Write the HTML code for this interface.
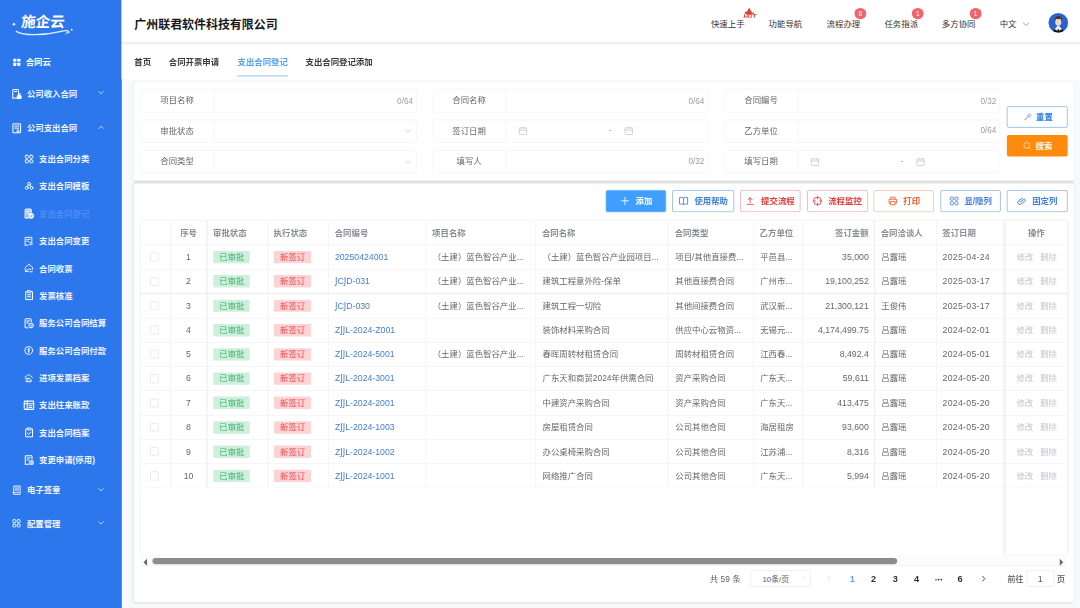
<!DOCTYPE html><html lang="zh-CN"><head><meta charset="utf-8"><title>支出合同登记</title>
<style>
*{box-sizing:border-box;margin:0;padding:0}
html,body{width:1080px;height:608px;overflow:hidden;background:#f8f9fa}
body{font-family:"Liberation Sans","Noto Sans CJK SC",sans-serif;color:#333}
#root{position:absolute;left:0;top:0;width:1920px;height:1081px;transform:scale(.5625);transform-origin:0 0;font-size:14.93px}
.side{color:#fff}
.m{font-weight:700;color:#eef4ff}
.num{font-size:15.5px}
.hd{color:#8a8d93;font-weight:700}
.td{color:#64676c}
.lnk{color:#467ed6}
.lbl{color:#666}
.cnt{color:#9a9da3;font-size:14.6px}
.tagg{background:#cfefdd;color:#3bb26d}
.tagr{background:#fdd3d5;color:#e94b4b}
.op{color:#c3c6cc}
.j{font-family:"DejaVu Sans","Liberation Sans",sans-serif;font-size:15px}
.btn{border-radius:3.2px;font-weight:700}
svg{fill:none}
</style></head><body><div id="root">
<div class="side" style="position:absolute;left:0px;top:0px;width:215.64px;height:1080.89px;background:#2c77ec;border-right:1.2px solid #2a68cc;"></div>
<svg style="position:absolute;left:17.78px;top:14.22px;width:124.44px;height:56.89px;overflow:visible;" viewBox="10 8 70 32"><text x="22.9" y="27.2" font-size="14.6" font-weight="700" fill="#fff" transform="skewX(-5)" font-family="'Liberation Sans','Noto Sans CJK SC',sans-serif" textLength="43.8" lengthAdjust="spacingAndGlyphs">施企云</text><circle cx="13.8" cy="24.5" r="1.25" fill="#eaf2ff"/><circle cx="71.6" cy="29.9" r="0.95" fill="#eaf2ff"/><circle cx="65.8" cy="34" r="0.7" fill="#dbe8ff"/><path d="M16.2 31.5 C24 36.4 44 35.4 60 31.7 C64 30.7 67.8 30.5 68.7 31.8 C69.2 32.8 68 33.4 66.9 32.9" stroke="#e6f0ff" stroke-width="1.3" stroke-linecap="round"/></svg>
<svg style="position:absolute;left:21.51px;top:102.76px;width:15.64px;height:15.64px;overflow:visible;" viewBox="0 0 16 16"><rect x="1.5" y="1.5" width="5.6" height="5.6" rx=".8" fill="#fff"/><rect x="8.9" y="1.5" width="5.6" height="5.6" rx=".8" fill="#fff"/><rect x="1.5" y="8.9" width="5.6" height="5.6" rx=".8" fill="#fff"/><rect x="8.9" y="8.9" width="5.6" height="5.6" rx=".8" fill="#fff"/></svg>
<div style="position:absolute;top:99.2px;height:24.89px;line-height:24.89px;white-space:nowrap;font-size:14.93px;left:45.69px;font-weight:700;color:#fff;">合同云</div>
<svg style="position:absolute;left:20.09px;top:156.8px;width:19.56px;height:19.56px;overflow:visible;" viewBox="0 0 16 16"><path d="M2.2 14.2V1.8h8.2v4.6M2.2 14.2h5.6M4.6 4.6h3.4" stroke="#fff" stroke-width="1.45" stroke-linecap="round" stroke-linejoin="round"/><path d="M8.6 14.4c-.4-3 1.2-5.8 3-5.8s3.2 2.8 2.8 5.8z" fill="#fff" stroke="#fff" stroke-width="1.45" stroke-linecap="round" stroke-linejoin="round"/><path d="M10.4 7.4l1.2 1.2 1.2-1.2" stroke="#fff" stroke-width="1.45" stroke-linecap="round" stroke-linejoin="round"/></svg>
<div class="m" style="position:absolute;top:155.2px;height:24.89px;line-height:24.89px;white-space:nowrap;font-size:14.93px;left:47.82px;">公司收入合同</div>
<svg style="position:absolute;left:174.04px;top:159.47px;width:11.02px;height:11.02px;overflow:visible;" viewBox="0 0 16 16"><path d="M2 5.4l6 5.6 6-5.6" stroke="#e6eefe" stroke-width="2.0" stroke-linecap="round" stroke-linejoin="round"/></svg>
<svg style="position:absolute;left:19.91px;top:217.78px;width:19.56px;height:19.56px;overflow:visible;" viewBox="0 0 16 16"><path d="M2.4 14.2V1.8h11.2v12.4zM5 5h6M5 8h6M8.4 11h2.8M8.4 13.2h2.8" stroke="#fff" stroke-width="1.45" stroke-linecap="round" stroke-linejoin="round"/></svg>
<div class="m" style="position:absolute;top:214.93px;height:24.89px;line-height:24.89px;white-space:nowrap;font-size:14.93px;left:47.82px;">公司支出合同</div>
<svg style="position:absolute;left:174.04px;top:220.62px;width:11.02px;height:11.02px;overflow:visible;" viewBox="0 0 16 16"><path d="M2 10.6l6-5.6 6 5.6" stroke="#e6eefe" stroke-width="2.0" stroke-linecap="round" stroke-linejoin="round"/></svg>
<svg style="position:absolute;left:42.67px;top:273.69px;width:17.42px;height:17.42px;overflow:visible;" viewBox="0 0 16 16"><rect x="1.8" y="1.8" width="5" height="5" rx="1.4" stroke="#fff" stroke-width="1.45" stroke-linecap="round" stroke-linejoin="round"/><rect x="9.2" y="1.8" width="5" height="5" rx="1.4" stroke="#fff" stroke-width="1.45" stroke-linecap="round" stroke-linejoin="round"/><rect x="1.8" y="9.2" width="5" height="5" rx="1.4" stroke="#fff" stroke-width="1.45" stroke-linecap="round" stroke-linejoin="round"/><rect x="9.2" y="9.2" width="5" height="5" rx="1.4" stroke="#fff" stroke-width="1.45" stroke-linecap="round" stroke-linejoin="round"/></svg>
<div class="m" style="position:absolute;top:270.84px;height:24.89px;line-height:24.89px;white-space:nowrap;font-size:14.93px;left:69.33px;">支出合同分类</div>
<svg style="position:absolute;left:42.67px;top:321.65px;width:17.42px;height:17.42px;overflow:visible;" viewBox="0 0 16 16"><circle cx="8" cy="4.4" r="2.4" stroke="#fff" stroke-width="1.45" stroke-linecap="round" stroke-linejoin="round"/><circle cx="4.2" cy="11" r="2.4" stroke="#fff" stroke-width="1.45" stroke-linecap="round" stroke-linejoin="round"/><circle cx="11.8" cy="11" r="2.4" stroke="#fff" stroke-width="1.45" stroke-linecap="round" stroke-linejoin="round"/><path d="M6.6 6.4l-1.4 2.4M9.4 6.4l1.4 2.4" stroke="#fff" stroke-width="1.45" stroke-linecap="round" stroke-linejoin="round"/></svg>
<div class="m" style="position:absolute;top:318.81px;height:24.89px;line-height:24.89px;white-space:nowrap;font-size:14.93px;left:69.33px;">支出合同模板</div>
<svg style="position:absolute;left:41.6px;top:369.97px;width:19.56px;height:19.56px;overflow:visible;" viewBox="0 0 16 16"><rect x="2.2" y="1.4" width="9" height="13.2" rx="1" fill="rgba(255,255,255,.5)"/><path d="M2.2 13.6V2.4a1 1 0 0 1 1-1h7a1 1 0 0 1 1 1v3.4M2.2 13.6a1 1 0 0 0 1 1h3.4M4.6 4.6h4.2M4.6 7.4h2.4" stroke="#fff" stroke-width="1.45" stroke-linecap="round" stroke-linejoin="round"/><circle cx="11" cy="11.2" r="3.7" fill="#fff" stroke="#fff"/><path d="M9.4 11.2l1.2 1.2 2-2.2" stroke="#2c77ec" stroke-width="1.3" stroke-linecap="round" stroke-linejoin="round"/></svg>
<div style="position:absolute;top:368.2px;height:24.89px;line-height:24.89px;white-space:nowrap;font-size:14.93px;left:69.33px;font-weight:700;color:#4b8df3;">支出合同登记</div>
<svg style="position:absolute;left:42.49px;top:419.54px;width:17.78px;height:17.78px;overflow:visible;" viewBox="0 0 16 16"><path d="M2.4 14.2V1.8h10.8v6M2.4 14.2h5M5 5h5.4M5 8h3" stroke="#fff" stroke-width="1.45" stroke-linecap="round" stroke-linejoin="round"/><path d="M9.6 10.2h4.2l-1.4-1.4M14 12.6H9.8l1.4 1.4" stroke="#fff" stroke-width="1.45" stroke-linecap="round" stroke-linejoin="round"/></svg>
<div class="m" style="position:absolute;top:416.87px;height:24.89px;line-height:24.89px;white-space:nowrap;font-size:14.93px;left:69.33px;">支出合同变更</div>
<svg style="position:absolute;left:42.84px;top:468.04px;width:17.07px;height:17.07px;overflow:visible;" viewBox="0 0 16 16"><path d="M8 1.8l6 5v3.4M8 1.8l-6 5v6.8h5" stroke="#fff" stroke-width="1.45" stroke-linecap="round" stroke-linejoin="round"/><path d="M2.6 13.6c2-3.4 5.6-4.4 9-3.6" stroke="#fff" stroke-width="1.45" stroke-linecap="round" stroke-linejoin="round"/><path d="M9.4 14.2h4.4" stroke="#fff" stroke-width="1.45" stroke-linecap="round" stroke-linejoin="round"/></svg>
<div class="m" style="position:absolute;top:465.55px;height:24.89px;line-height:24.89px;white-space:nowrap;font-size:14.93px;left:69.33px;">合同收票</div>
<svg style="position:absolute;left:41.6px;top:515.11px;width:19.56px;height:19.56px;overflow:visible;" viewBox="0 0 16 16"><path d="M5.4 3H3v11.4h10V3h-2.4" stroke="#fff" stroke-width="1.45" stroke-linecap="round" stroke-linejoin="round"/><rect x="5.4" y="1.6" width="5.2" height="2.8" rx=".6" stroke="#fff" stroke-width="1.45" stroke-linecap="round" stroke-linejoin="round"/><path d="M5.6 7.4h4.8M5.6 10.4h4.8" stroke="#fff" stroke-width="1.45" stroke-linecap="round" stroke-linejoin="round"/></svg>
<div class="m" style="position:absolute;top:514.22px;height:24.89px;line-height:24.89px;white-space:nowrap;font-size:14.93px;left:69.33px;">发票核准</div>
<svg style="position:absolute;left:41.6px;top:564.68px;width:19.56px;height:19.56px;overflow:visible;" viewBox="0 0 16 16"><path d="M2.2 13.6V2.4a1 1 0 0 1 1-1h7a1 1 0 0 1 1 1v3.4M2.2 13.6a1 1 0 0 0 1 1h3.4M4.6 4.6h4.2M4.6 7.4h2.4" stroke="#fff" stroke-width="1.45" stroke-linecap="round" stroke-linejoin="round"/><circle cx="11" cy="11.2" r="3.3" stroke="#fff" stroke-width="1.45" stroke-linecap="round" stroke-linejoin="round"/><path d="M9.8 9.8l1.2 1.4 1.2-1.4M11 11.2v1.8" stroke="#fff" stroke-width="1" stroke-linecap="round"/></svg>
<div class="m" style="position:absolute;top:562.9px;height:24.89px;line-height:24.89px;white-space:nowrap;font-size:14.93px;left:69.33px;">服务公司合同结算</div>
<svg style="position:absolute;left:42.31px;top:614.06px;width:18.13px;height:18.13px;overflow:visible;" viewBox="0 0 16 16"><circle cx="8" cy="8" r="6.2" stroke="#fff" stroke-width="1.45" stroke-linecap="round" stroke-linejoin="round"/><path d="M8 4.6c-1.4 1.4-1.4 3.6 0 5 1.4-1.4 1.4-3.6 0-5zM8 9.6v2" stroke="#fff" stroke-width="1.45" stroke-linecap="round" stroke-linejoin="round"/></svg>
<div class="m" style="position:absolute;top:611.57px;height:24.89px;line-height:24.89px;white-space:nowrap;font-size:14.93px;left:69.33px;">服务公司合同付款</div>
<svg style="position:absolute;left:42.49px;top:662.92px;width:17.78px;height:17.78px;overflow:visible;" viewBox="0 0 16 16"><path d="M2 7l6-4.6L14 7M3.6 8.8h6.2M3.6 11.4h4M3.6 14h8" stroke="#fff" stroke-width="1.45" stroke-linecap="round" stroke-linejoin="round"/><path d="M10.4 10.6l2.8 1.6-2.8 1.6" stroke="#fff" stroke-width="1.45" stroke-linecap="round" stroke-linejoin="round"/></svg>
<div class="m" style="position:absolute;top:660.25px;height:24.89px;line-height:24.89px;white-space:nowrap;font-size:14.93px;left:69.33px;">进项发票档案</div>
<svg style="position:absolute;left:40.89px;top:709.99px;width:20.98px;height:20.98px;overflow:visible;" viewBox="0 0 16 16"><rect x="1.6" y="2.4" width="12.8" height="11.2" rx="1" stroke="#fff" stroke-width="1.45" stroke-linecap="round" stroke-linejoin="round"/><path d="M1.6 6h12.8M5.6 2.4v11.2M8 8.6h4M8 11h4" stroke="#fff" stroke-width="1.45" stroke-linecap="round" stroke-linejoin="round"/></svg>
<div class="m" style="position:absolute;top:708.92px;height:24.89px;line-height:24.89px;white-space:nowrap;font-size:14.93px;left:69.33px;">支出往来账款</div>
<svg style="position:absolute;left:41.6px;top:759.38px;width:19.56px;height:19.56px;overflow:visible;" viewBox="0 0 16 16"><path d="M5.4 3H3v11.4h10V3h-2.4" stroke="#fff" stroke-width="1.45" stroke-linecap="round" stroke-linejoin="round"/><rect x="5.4" y="1.6" width="5.2" height="2.8" rx=".6" stroke="#fff" stroke-width="1.45" stroke-linecap="round" stroke-linejoin="round"/><path d="M5.6 9l1.8 1.8 3.2-3.4" stroke="#fff" stroke-width="1.45" stroke-linecap="round" stroke-linejoin="round"/></svg>
<div class="m" style="position:absolute;top:757.6px;height:24.89px;line-height:24.89px;white-space:nowrap;font-size:14.93px;left:69.33px;">支出合同档案</div>
<svg style="position:absolute;left:41.6px;top:808.05px;width:19.56px;height:19.56px;overflow:visible;" viewBox="0 0 16 16"><path d="M2.4 14.2V1.8h9.8v5.4M2.4 14.2h5M5 5h4.6M5 8h2.6" stroke="#fff" stroke-width="1.45" stroke-linecap="round" stroke-linejoin="round"/><path d="M9.4 9.4h4.4v4.8H9.4zM10.8 11h1.6M10.8 12.6h1.6" stroke="#fff" stroke-width="1.45" stroke-linecap="round" stroke-linejoin="round"/></svg>
<div class="m" style="position:absolute;top:806.28px;height:24.89px;line-height:24.89px;white-space:nowrap;font-size:14.93px;left:69.33px;">变更申请(停用)</div>
<svg style="position:absolute;left:20.62px;top:862.4px;width:18.13px;height:18.13px;overflow:visible;" viewBox="0 0 16 16"><path d="M3 14.2V1.8h10v12.4zM5.4 5h5.2M5.4 8h5.2" stroke="#fff" stroke-width="1.45" stroke-linecap="round" stroke-linejoin="round"/><path d="M7.4 11.6h3.4M5.4 11.6h.2" stroke="#fff" stroke-width="1.45" stroke-linecap="round" stroke-linejoin="round"/><path d="M1.8 12.4h2.4" stroke="#fff" stroke-width="1.45" stroke-linecap="round" stroke-linejoin="round"/></svg>
<div class="m" style="position:absolute;top:859.38px;height:24.89px;line-height:24.89px;white-space:nowrap;font-size:14.93px;left:47.82px;">电子签章</div>
<svg style="position:absolute;left:174.04px;top:864.89px;width:11.02px;height:11.02px;overflow:visible;" viewBox="0 0 16 16"><path d="M2 5.4l6 5.6 6-5.6" stroke="#e6eefe" stroke-width="2.0" stroke-linecap="round" stroke-linejoin="round"/></svg>
<svg style="position:absolute;left:21.33px;top:922.49px;width:16.71px;height:16.71px;overflow:visible;" viewBox="0 0 16 16"><rect x="1.8" y="1.8" width="5" height="5" rx="1.4" stroke="#fff" stroke-width="1.45" stroke-linecap="round" stroke-linejoin="round"/><rect x="9.2" y="1.8" width="5" height="5" rx="1.4" stroke="#fff" stroke-width="1.45" stroke-linecap="round" stroke-linejoin="round"/><rect x="1.8" y="9.2" width="5" height="5" rx="1.4" stroke="#fff" stroke-width="1.45" stroke-linecap="round" stroke-linejoin="round"/><rect x="9.2" y="9.2" width="5" height="5" rx="1.4" stroke="#fff" stroke-width="1.45" stroke-linecap="round" stroke-linejoin="round"/></svg>
<div class="m" style="position:absolute;top:918.93px;height:24.89px;line-height:24.89px;white-space:nowrap;font-size:14.93px;left:47.82px;">配置管理</div>
<svg style="position:absolute;left:174.04px;top:924.27px;width:11.02px;height:11.02px;overflow:visible;" viewBox="0 0 16 16"><path d="M2 5.4l6 5.6 6-5.6" stroke="#e6eefe" stroke-width="2.0" stroke-linecap="round" stroke-linejoin="round"/></svg>
<div style="position:absolute;left:215.64px;top:75.73px;width:1704.36px;height:65.6px;background:#fff;"></div>
<div style="position:absolute;left:215.64px;top:0px;width:1704.36px;height:76.44px;background:#fff;"></div>
<div style="position:absolute;left:215.64px;top:72.18px;width:1704.36px;height:10.31px;background:linear-gradient(to bottom,rgba(0,0,0,0),rgba(0,0,0,.022) 30%,rgba(0,0,0,.08) 50%,rgba(0,0,0,.028) 68%,rgba(0,0,0,0));"></div>
<div style="position:absolute;top:27.73px;height:32px;line-height:32px;white-space:nowrap;font-size:21.24px;left:238.76px;font-weight:700;color:#1a1a1a;">广州联君软件科技有限公司</div>
<div style="position:absolute;top:30.93px;height:24.89px;line-height:24.89px;white-space:nowrap;font-size:14.93px;left:1116px;width:355.56px;text-align:center;color:#333;">快速上手</div>
<div style="position:absolute;top:30.93px;height:24.89px;line-height:24.89px;white-space:nowrap;font-size:14.93px;left:1218.49px;width:355.56px;text-align:center;color:#333;">功能导航</div>
<div style="position:absolute;top:30.93px;height:24.89px;line-height:24.89px;white-space:nowrap;font-size:14.93px;left:1321.6px;width:355.56px;text-align:center;color:#333;">流程办理</div>
<div style="position:absolute;top:30.93px;height:24.89px;line-height:24.89px;white-space:nowrap;font-size:14.93px;left:1424.44px;width:355.56px;text-align:center;color:#333;">任务指派</div>
<div style="position:absolute;top:30.93px;height:24.89px;line-height:24.89px;white-space:nowrap;font-size:14.93px;left:1526.49px;width:355.56px;text-align:center;color:#333;">多方协同</div>
<div style="position:absolute;top:30.93px;height:24.89px;line-height:24.89px;white-space:nowrap;font-size:14.93px;left:1777.24px;color:#333;">中文</div>
<svg style="position:absolute;left:1818.13px;top:36.98px;width:12.44px;height:12.44px;overflow:visible;" viewBox="0 0 16 16"><path d="M2 5.4l6 5.6 6-5.6" stroke="#666" stroke-width="1.4" stroke-linecap="round" stroke-linejoin="round"/></svg>
<div style="position:absolute;left:1518.84px;top:13.51px;width:20.98px;height:20.98px;background:#f2656d;border-radius:50%;"></div>
<div style="position:absolute;top:16px;height:17.78px;line-height:17.78px;white-space:nowrap;font-size:11.73px;left:1351.56px;width:355.56px;text-align:center;color:#fff;">8</div>
<div style="position:absolute;left:1621.07px;top:13.51px;width:20.98px;height:20.98px;background:#f2656d;border-radius:50%;"></div>
<div style="position:absolute;top:16px;height:17.78px;line-height:17.78px;white-space:nowrap;font-size:11.73px;left:1453.78px;width:355.56px;text-align:center;color:#fff;">1</div>
<div style="position:absolute;left:1723.73px;top:13.51px;width:20.98px;height:20.98px;background:#f2656d;border-radius:50%;"></div>
<div style="position:absolute;top:16px;height:17.78px;line-height:17.78px;white-space:nowrap;font-size:11.73px;left:1556.44px;width:355.56px;text-align:center;color:#fff;">1</div>
<svg style="position:absolute;left:1315.56px;top:10.67px;width:32px;height:23.11px;overflow:visible;" viewBox="740 6 18 13"><path d="M746.4 14.2c-1.6-.4-2.4-1.6-1.6-2.8 1.4.6 2.2.2 2.6-1 .4-1.4 1.2-2.4 2.2-2.8-.2 1.4.4 2.2 1.2 3 .6.6 1 1.400 .6 2.400 1-.2 1.600-.8 1.800-1.600 .8 1.200 .2 2.400-1 2.800z" fill="#e8392c"/><text x="743.2" y="18" font-size="4.6" font-weight="700" font-style="italic" fill="#e8392c" font-family="'Liberation Sans',sans-serif" textLength="12.6" lengthAdjust="spacingAndGlyphs">HOT</text></svg>
<svg style="position:absolute;left:1863.64px;top:22.58px;width:34.84px;height:34.84px;overflow:visible;" viewBox="0 0 40 40"><defs><clipPath id="av"><circle cx="20" cy="20" r="20"/></clipPath></defs><circle cx="20" cy="20" r="20" fill="#2a63d0"/><g clip-path="url(#av)"><path d="M8 41c0-6 5-9 12-9s12 3 12 9z" fill="#141922"/><path d="M12.500 33.500l7.500-9 7.500 9-7.500 3.500z" fill="#f4f6fa"/><path d="M19 33h2l.8 5h-3.600z" fill="#1c2230"/><ellipse cx="20" cy="18.600" rx="6.200" ry="7.800" fill="#ecd8ca"/><path d="M13 17.500c-1-7.500 3-11.500 7.200-11.500 4.600 0 8 4 6.800 11.500-.6-3-1.500-4.600-3-5.400-2.400 1.200-6 1.200-8.200 0-1.400.8-2.200 2.400-2.800 5.400z" fill="#5a2c24"/></g></svg>
<div style="position:absolute;top:99.02px;height:24.89px;line-height:24.89px;white-space:nowrap;font-size:14.93px;left:238.67px;color:#3a3c40;font-weight:700;">首页</div>
<div style="position:absolute;top:99.02px;height:24.89px;line-height:24.89px;white-space:nowrap;font-size:14.93px;left:300px;color:#3a3c40;font-weight:700;">合同开票申请</div>
<div style="position:absolute;top:99.02px;height:24.89px;line-height:24.89px;white-space:nowrap;font-size:14.93px;left:422.22px;color:#55a2f4;font-weight:700;">支出合同登记</div>
<div style="position:absolute;top:99.02px;height:24.89px;line-height:24.89px;white-space:nowrap;font-size:14.93px;left:543.11px;color:#3a3c40;font-weight:700;">支出合同登记添加</div>
<div style="position:absolute;left:422.22px;top:133.69px;width:89.78px;height:2.13px;background:#8fc0f5;"></div>
<div style="position:absolute;left:238.22px;top:145.78px;width:1670.4px;height:175.29px;background:#fff;border-radius:3px;box-shadow:0 0 4px rgba(0,0,0,.06);"></div>
<div style="position:absolute;left:249.6px;top:157.51px;width:491.56px;height:43.02px;border:1px solid #eef0f3;border-radius:5px;background:#fff;"></div>
<div style="position:absolute;left:379.73px;top:157.51px;width:1.07px;height:43.02px;background:#eef0f3;"></div>
<div class="lbl" style="position:absolute;top:165.87px;height:24.89px;line-height:24.89px;white-space:nowrap;font-size:14.93px;left:137.07px;width:355.56px;text-align:center;">项目名称</div>
<div class="cnt" style="position:absolute;top:167.29px;height:24.89px;line-height:24.89px;white-space:nowrap;left:201.07px;width:533.33px;text-align:right;">0/64</div>
<div style="position:absolute;left:768.71px;top:157.51px;width:490.31px;height:43.02px;border:1px solid #eef0f3;border-radius:5px;background:#fff;"></div>
<div style="position:absolute;left:898.84px;top:157.51px;width:1.07px;height:43.02px;background:#eef0f3;"></div>
<div class="lbl" style="position:absolute;top:165.87px;height:24.89px;line-height:24.89px;white-space:nowrap;font-size:14.93px;left:656.18px;width:355.56px;text-align:center;">合同名称</div>
<div class="cnt" style="position:absolute;top:167.29px;height:24.89px;line-height:24.89px;white-space:nowrap;left:718.93px;width:533.33px;text-align:right;">0/64</div>
<div style="position:absolute;left:1287.82px;top:157.51px;width:490.31px;height:43.02px;border:1px solid #eef0f3;border-radius:5px;background:#fff;"></div>
<div style="position:absolute;left:1417.96px;top:157.51px;width:1.07px;height:43.02px;background:#eef0f3;"></div>
<div class="lbl" style="position:absolute;top:165.87px;height:24.89px;line-height:24.89px;white-space:nowrap;font-size:14.93px;left:1175.29px;width:355.56px;text-align:center;">合同编号</div>
<div class="cnt" style="position:absolute;top:167.29px;height:24.89px;line-height:24.89px;white-space:nowrap;left:1238.04px;width:533.33px;text-align:right;">0/32</div>
<div style="position:absolute;left:249.6px;top:212.8px;width:491.56px;height:40.89px;border:1px solid #eef0f3;border-radius:5px;background:#fff;"></div>
<div style="position:absolute;left:379.73px;top:212.8px;width:1.07px;height:40.89px;background:#eef0f3;"></div>
<div class="lbl" style="position:absolute;top:221.16px;height:24.89px;line-height:24.89px;white-space:nowrap;font-size:14.93px;left:137.07px;width:355.56px;text-align:center;">审批状态</div>
<svg style="position:absolute;left:719.29px;top:227.38px;width:12.44px;height:12.44px;overflow:visible;" viewBox="0 0 16 16"><path d="M2 5.4l6 5.6 6-5.6" stroke="#b4b8c0" stroke-width="1.3" stroke-linecap="round" stroke-linejoin="round"/></svg>
<div style="position:absolute;left:768.71px;top:212.8px;width:490.31px;height:40.89px;border:1px solid #eef0f3;border-radius:5px;background:#fff;"></div>
<div style="position:absolute;left:898.84px;top:212.8px;width:1.07px;height:40.89px;background:#eef0f3;"></div>
<div class="lbl" style="position:absolute;top:221.16px;height:24.89px;line-height:24.89px;white-space:nowrap;font-size:14.93px;left:656.18px;width:355.56px;text-align:center;">签订日期</div>
<svg style="position:absolute;left:921.24px;top:224px;width:17.42px;height:17.42px;overflow:visible;" viewBox="0 0 16 16"><rect x="2" y="3" width="12" height="11" rx="1" stroke="#c4c7ce" stroke-width="1.3"/><path d="M2 6.600h12M5.200 1.600v2.800M10.800 1.600v2.800" stroke="#c4c7ce" stroke-width="1.3"/></svg>
<div style="position:absolute;top:219.91px;height:24.89px;line-height:24.89px;white-space:nowrap;font-size:14.93px;left:906.67px;width:355.56px;text-align:center;color:#999;">-</div>
<svg style="position:absolute;left:1109.33px;top:224px;width:17.42px;height:17.42px;overflow:visible;" viewBox="0 0 16 16"><rect x="2" y="3" width="12" height="11" rx="1" stroke="#c4c7ce" stroke-width="1.3"/><path d="M2 6.600h12M5.200 1.600v2.800M10.800 1.600v2.800" stroke="#c4c7ce" stroke-width="1.3"/></svg>
<div style="position:absolute;left:1287.82px;top:212.8px;width:490.31px;height:40.89px;border:1px solid #eef0f3;border-radius:5px;background:#fff;"></div>
<div style="position:absolute;left:1417.96px;top:212.8px;width:1.07px;height:40.89px;background:#eef0f3;"></div>
<div class="lbl" style="position:absolute;top:221.16px;height:24.89px;line-height:24.89px;white-space:nowrap;font-size:14.93px;left:1175.29px;width:355.56px;text-align:center;">乙方单位</div>
<div class="cnt" style="position:absolute;top:220.44px;height:24.89px;line-height:24.89px;white-space:nowrap;left:1238.04px;width:533.33px;text-align:right;">0/64</div>
<div style="position:absolute;left:249.6px;top:267.38px;width:491.56px;height:40.71px;border:1px solid #eef0f3;border-radius:5px;background:#fff;"></div>
<div style="position:absolute;left:379.73px;top:267.38px;width:1.07px;height:40.71px;background:#eef0f3;"></div>
<div class="lbl" style="position:absolute;top:274.67px;height:24.89px;line-height:24.89px;white-space:nowrap;font-size:14.93px;left:137.07px;width:355.56px;text-align:center;">合同类型</div>
<svg style="position:absolute;left:719.29px;top:281.96px;width:12.44px;height:12.44px;overflow:visible;" viewBox="0 0 16 16"><path d="M2 5.4l6 5.6 6-5.6" stroke="#b4b8c0" stroke-width="1.3" stroke-linecap="round" stroke-linejoin="round"/></svg>
<div style="position:absolute;left:768.71px;top:267.38px;width:490.31px;height:40.71px;border:1px solid #eef0f3;border-radius:5px;background:#fff;"></div>
<div style="position:absolute;left:898.84px;top:267.38px;width:1.07px;height:40.71px;background:#eef0f3;"></div>
<div class="lbl" style="position:absolute;top:274.67px;height:24.89px;line-height:24.89px;white-space:nowrap;font-size:14.93px;left:656.18px;width:355.56px;text-align:center;">填写人</div>
<div class="cnt" style="position:absolute;top:275.02px;height:24.89px;line-height:24.89px;white-space:nowrap;left:718.93px;width:533.33px;text-align:right;">0/32</div>
<div style="position:absolute;left:1287.82px;top:267.38px;width:490.31px;height:40.71px;border:1px solid #eef0f3;border-radius:5px;background:#fff;"></div>
<div style="position:absolute;left:1417.96px;top:267.38px;width:1.07px;height:40.71px;background:#eef0f3;"></div>
<div class="lbl" style="position:absolute;top:274.67px;height:24.89px;line-height:24.89px;white-space:nowrap;font-size:14.93px;left:1175.29px;width:355.56px;text-align:center;">填写日期</div>
<svg style="position:absolute;left:1440.36px;top:278.58px;width:17.42px;height:17.42px;overflow:visible;" viewBox="0 0 16 16"><rect x="2" y="3" width="12" height="11" rx="1" stroke="#c4c7ce" stroke-width="1.3"/><path d="M2 6.600h12M5.200 1.600v2.800M10.800 1.600v2.800" stroke="#c4c7ce" stroke-width="1.3"/></svg>
<div style="position:absolute;top:274.49px;height:24.89px;line-height:24.89px;white-space:nowrap;font-size:14.93px;left:1425.78px;width:355.56px;text-align:center;color:#999;">-</div>
<svg style="position:absolute;left:1628.44px;top:278.58px;width:17.42px;height:17.42px;overflow:visible;" viewBox="0 0 16 16"><rect x="2" y="3" width="12" height="11" rx="1" stroke="#c4c7ce" stroke-width="1.3"/><path d="M2 6.600h12M5.200 1.600v2.800M10.800 1.600v2.800" stroke="#c4c7ce" stroke-width="1.3"/></svg>
<div class="btn" style="position:absolute;left:1790.4px;top:188.89px;width:108.09px;height:38.22px;border:1.5px solid #5b98d6;background:#fff;"></div>
<svg style="position:absolute;left:1819.38px;top:200.18px;width:16px;height:16px;overflow:visible;" viewBox="0 0 16 16"><path d="M2.600 13.400l6.400-6.400" stroke="#5a6f9a" stroke-width="1.5" stroke-linecap="round"/><path d="M10.800 1.800v2.400M10.800 6.600v2.400M7.200 5.400h2.400M12 5.400h2.400M8.200 2.800l1.200 1.200M12.200 6.800l1.200 1.200M13.400 2.800l-1.200 1.200" stroke="#7fb0ee" stroke-width="1.100" stroke-linecap="round"/></svg>
<div style="position:absolute;top:196.09px;height:24.89px;line-height:24.89px;white-space:nowrap;font-size:14.93px;left:1841.78px;color:#2f7fe6;font-weight:700;">重置</div>
<div class="btn" style="position:absolute;left:1790.4px;top:239.56px;width:108.09px;height:38.67px;background:#ff8b0e;"></div>
<svg style="position:absolute;left:1817.6px;top:251.02px;width:16px;height:16px;overflow:visible;" viewBox="0 0 16 16"><circle cx="7.400" cy="7.400" r="5.200" stroke="#ffe3c2" stroke-width="1.400"/><path d="M11.200 11.400l2.800 2.800" stroke="#ffe3c2" stroke-width="1.400" stroke-linecap="round"/></svg>
<div style="position:absolute;top:247.29px;height:24.89px;line-height:24.89px;white-space:nowrap;font-size:14.93px;left:1841.07px;color:#fff;font-weight:700;">搜索</div>
<div style="position:absolute;left:238.22px;top:319.29px;width:1670.4px;height:8.53px;background:linear-gradient(to bottom,rgba(0,0,0,0),rgba(0,0,0,.03) 25%,rgba(0,0,0,.085) 48%,rgba(0,0,0,.03) 72%,rgba(0,0,0,0));"></div>
<div style="position:absolute;left:238.22px;top:325.69px;width:1670.4px;height:744px;background:#fff;border-radius:3px;box-shadow:0 1px 5px rgba(0,0,0,.10);"></div>
<div class="btn" style="position:absolute;left:1076.62px;top:337.78px;width:107.38px;height:38.76px;border:1.6px solid #409eff;background:#409eff;"></div>
<svg style="position:absolute;left:1103.47px;top:349.33px;width:16px;height:16px;overflow:visible;" viewBox="0 0 16 16"><path d="M8 1.600v12.800M1.600 8h12.800" stroke="#fff" stroke-width="1.500" stroke-linecap="round"/></svg>
<div style="position:absolute;top:345.78px;height:24.89px;line-height:24.89px;white-space:nowrap;font-size:14.93px;left:1129.96px;color:#fff;font-weight:700;">添加</div>
<div class="btn" style="position:absolute;left:1195.02px;top:337.78px;width:109.51px;height:38.76px;border:1.6px solid #5d97d2;background:#fff;"></div>
<svg style="position:absolute;left:1205.51px;top:348.09px;width:18.49px;height:18.49px;overflow:visible;" viewBox="0 0 16 16"><path d="M8 3.400v9.800M8 3.400C6.400 2.600 4 2.400 1.800 2.800v10c2.200-.4 4.600-.2 6.200.6 1.600-.8 4-1 6.200-.6v-10C12 2.400 9.600 2.600 8 3.400z" stroke="#3f7fe0" stroke-width="1.300" stroke-linejoin="round"/></svg>
<div style="position:absolute;top:345.78px;height:24.89px;line-height:24.89px;white-space:nowrap;font-size:14.93px;left:1234.49px;color:#3f7fe0;font-weight:700;">使用帮助</div>
<div class="btn" style="position:absolute;left:1315.56px;top:337.78px;width:107.91px;height:38.76px;border:1.6px solid #e68a8e;background:#fff;"></div>
<svg style="position:absolute;left:1325.33px;top:348.8px;width:17.07px;height:17.07px;overflow:visible;" viewBox="0 0 16 16"><path d="M8 10.400V2.600M4.800 5.600L8 2.400l3.200 3.200M3 13.400h10" stroke="#e23c3c" stroke-width="1.400" stroke-linecap="round" stroke-linejoin="round"/></svg>
<div style="position:absolute;top:345.78px;height:24.89px;line-height:24.89px;white-space:nowrap;font-size:14.93px;left:1353.07px;color:#e23c3c;font-weight:700;">提交流程</div>
<div class="btn" style="position:absolute;left:1434.84px;top:337.78px;width:107.91px;height:38.76px;border:1.6px solid #e68a8e;background:#fff;"></div>
<svg style="position:absolute;left:1444.27px;top:348.09px;width:18.49px;height:18.49px;overflow:visible;" viewBox="0 0 16 16"><circle cx="8" cy="8" r="6" stroke="#e23c3c" stroke-width="1.300"/><path d="M8 1.400v3.400M8 11.200v3.400M1.400 8h3.400M11.200 8h3.400" stroke="#e23c3c" stroke-width="1.300" stroke-linecap="round"/></svg>
<div style="position:absolute;top:345.78px;height:24.89px;line-height:24.89px;white-space:nowrap;font-size:14.93px;left:1472.36px;color:#e23c3c;font-weight:700;">流程监控</div>
<div class="btn" style="position:absolute;left:1552.53px;top:337.78px;width:107.56px;height:38.76px;border:1.6px solid #ecaa86;background:#fff;"></div>
<svg style="position:absolute;left:1577.6px;top:348.09px;width:18.49px;height:18.49px;overflow:visible;" viewBox="0 0 16 16"><path d="M4.600 5.400V2.200h6.800v3.200M4.600 11.400H2.200V5.400h11.600v6h-2.400" stroke="#ea6230" stroke-width="1.300" stroke-linejoin="round"/><rect x="4.600" y="9" width="6.800" height="5" stroke="#ea6230" stroke-width="1.300"/></svg>
<div style="position:absolute;top:345.78px;height:24.89px;line-height:24.89px;white-space:nowrap;font-size:14.93px;left:1605.87px;color:#ea6230;font-weight:700;">打印</div>
<div class="btn" style="position:absolute;left:1671.82px;top:337.78px;width:107.2px;height:38.76px;border:1.6px solid #5d97d2;background:#fff;"></div>
<svg style="position:absolute;left:1687.47px;top:348.09px;width:18.49px;height:18.49px;overflow:visible;" viewBox="0 0 16 16"><rect x="2" y="2" width="4.800" height="4.800" rx="1.400" stroke="#3f7fe0" stroke-width="1.300"/><rect x="9.200" y="2" width="4.800" height="4.800" rx="1.400" stroke="#3f7fe0" stroke-width="1.300"/><rect x="2" y="9.200" width="4.800" height="4.800" rx="1.400" stroke="#3f7fe0" stroke-width="1.300"/><rect x="9.200" y="9.200" width="4.800" height="4.800" rx="1.400" stroke="#3f7fe0" stroke-width="1.300"/></svg>
<div style="position:absolute;top:345.78px;height:24.89px;line-height:24.89px;white-space:nowrap;font-size:14.93px;left:1714.49px;color:#3f7fe0;font-weight:700;">显/隐列</div>
<div class="btn" style="position:absolute;left:1790.4px;top:337.78px;width:107.91px;height:38.76px;border:1.6px solid #5d97d2;background:#fff;"></div>
<svg style="position:absolute;left:1807.11px;top:348.09px;width:18.49px;height:18.49px;overflow:visible;" viewBox="0 0 16 16"><path d="M6.200 9.800l4.600-4.600a1.500 1.500 0 0 1 2.200 2.200l-5.800 5.800a3 3 0 0 1-4.200-4.200l5.800-5.800" stroke="#3f7fe0" stroke-width="1.400" stroke-linecap="round" stroke-linejoin="round" transform="rotate(8 8 8)"/></svg>
<div style="position:absolute;top:345.78px;height:24.89px;line-height:24.89px;white-space:nowrap;font-size:14.93px;left:1835.02px;color:#3f7fe0;font-weight:700;">固定列</div>
<div style="position:absolute;left:248.89px;top:391.29px;width:1648.53px;height:1.07px;background:#eceef1;"></div>
<div style="position:absolute;left:248.89px;top:391.29px;width:1.07px;height:593.24px;background:#eceef1;"></div>
<div style="position:absolute;left:248.89px;top:435.02px;width:1648.53px;height:1.07px;background:#eceef1;"></div>
<div style="position:absolute;left:248.89px;top:478.24px;width:1648.53px;height:1.07px;background:#eceef1;"></div>
<div style="position:absolute;left:248.89px;top:521.46px;width:1648.53px;height:1.07px;background:#eceef1;"></div>
<div style="position:absolute;left:248.89px;top:564.68px;width:1648.53px;height:1.07px;background:#eceef1;"></div>
<div style="position:absolute;left:248.89px;top:607.89px;width:1648.53px;height:1.07px;background:#eceef1;"></div>
<div style="position:absolute;left:248.89px;top:651.11px;width:1648.53px;height:1.07px;background:#eceef1;"></div>
<div style="position:absolute;left:248.89px;top:694.33px;width:1648.53px;height:1.07px;background:#eceef1;"></div>
<div style="position:absolute;left:248.89px;top:737.55px;width:1648.53px;height:1.07px;background:#eceef1;"></div>
<div style="position:absolute;left:248.89px;top:780.76px;width:1648.53px;height:1.07px;background:#eceef1;"></div>
<div style="position:absolute;left:248.89px;top:823.98px;width:1648.53px;height:1.07px;background:#eceef1;"></div>
<div style="position:absolute;left:248.89px;top:867.2px;width:1648.53px;height:1.07px;background:#eceef1;"></div>
<div style="position:absolute;left:302.93px;top:391.29px;width:1.07px;height:475.91px;background:#eceef1;"></div>
<div style="position:absolute;left:367.47px;top:391.29px;width:1.07px;height:475.91px;background:#eceef1;"></div>
<div style="position:absolute;left:475.2px;top:391.29px;width:1.07px;height:475.91px;background:#eceef1;"></div>
<div style="position:absolute;left:583.82px;top:391.29px;width:1.07px;height:475.91px;background:#eceef1;"></div>
<div style="position:absolute;left:756.98px;top:391.29px;width:1.07px;height:475.91px;background:#eceef1;"></div>
<div style="position:absolute;left:952.18px;top:391.29px;width:1.07px;height:475.91px;background:#eceef1;"></div>
<div style="position:absolute;left:1188.27px;top:391.29px;width:1.07px;height:475.91px;background:#eceef1;"></div>
<div style="position:absolute;left:1339.2px;top:391.29px;width:1.07px;height:475.91px;background:#eceef1;"></div>
<div style="position:absolute;left:1426.13px;top:391.29px;width:1.07px;height:475.91px;background:#eceef1;"></div>
<div style="position:absolute;left:1554.49px;top:391.29px;width:1.07px;height:475.91px;background:#eceef1;"></div>
<div style="position:absolute;left:1664px;top:391.29px;width:1.07px;height:475.91px;background:#eceef1;"></div>
<div class="hd" style="position:absolute;top:401.96px;height:24.89px;line-height:24.89px;white-space:nowrap;font-size:14.93px;left:157.42px;width:355.56px;text-align:center;">序号</div>
<div class="hd" style="position:absolute;top:401.96px;height:24.89px;line-height:24.89px;white-space:nowrap;font-size:14.93px;left:378.67px;">审批状态</div>
<div class="hd" style="position:absolute;top:401.96px;height:24.89px;line-height:24.89px;white-space:nowrap;font-size:14.93px;left:486.4px;">执行状态</div>
<div class="hd" style="position:absolute;top:401.96px;height:24.89px;line-height:24.89px;white-space:nowrap;font-size:14.93px;left:595.02px;">合同编号</div>
<div class="hd" style="position:absolute;top:401.96px;height:24.89px;line-height:24.89px;white-space:nowrap;font-size:14.93px;left:768.18px;">项目名称</div>
<div class="hd" style="position:absolute;top:401.96px;height:24.89px;line-height:24.89px;white-space:nowrap;font-size:14.93px;left:963.38px;">合同名称</div>
<div class="hd" style="position:absolute;top:401.96px;height:24.89px;line-height:24.89px;white-space:nowrap;font-size:14.93px;left:1199.47px;">合同类型</div>
<div class="hd" style="position:absolute;top:401.96px;height:24.89px;line-height:24.89px;white-space:nowrap;font-size:14.93px;left:1350.4px;">乙方单位</div>
<div class="hd" style="position:absolute;top:401.96px;height:24.89px;line-height:24.89px;white-space:nowrap;font-size:14.93px;left:1010.84px;width:533.33px;text-align:right;">签订金额</div>
<div class="hd" style="position:absolute;top:401.96px;height:24.89px;line-height:24.89px;white-space:nowrap;font-size:14.93px;left:1565.69px;">合同洽谈人</div>
<div class="hd" style="position:absolute;top:401.96px;height:24.89px;line-height:24.89px;white-space:nowrap;font-size:14.93px;left:1675.2px;">签订日期</div>
<div style="position:absolute;left:266.84px;top:449.34px;width:15.29px;height:15.29px;border:1px solid #d9dce3;border-radius:2px;background:#fff;"></div>
<div class="td num" style="position:absolute;top:445.08px;height:24.89px;line-height:24.89px;white-space:nowrap;left:157.42px;width:355.56px;text-align:center;">1</div>
<div class="tagg" style="position:absolute;left:379.38px;top:446.14px;width:65.07px;height:21.87px;border-radius:2px;"></div>
<div style="position:absolute;top:445.25px;height:24.89px;line-height:24.89px;white-space:nowrap;font-size:14.93px;left:234.49px;width:355.56px;text-align:center;color:#3bb26d;">已审批</div>
<div class="tagr" style="position:absolute;left:487.47px;top:446.14px;width:65.42px;height:21.87px;border-radius:2px;"></div>
<div style="position:absolute;top:445.25px;height:24.89px;line-height:24.89px;white-space:nowrap;font-size:14.93px;left:342.4px;width:355.56px;text-align:center;color:#e94b4b;">新签订</div>
<div class="lnk num" style="position:absolute;top:445.08px;height:24.89px;line-height:24.89px;white-space:nowrap;left:595.38px;">20250424001</div>
<div class="td" style="position:absolute;top:445.08px;height:24.89px;line-height:24.89px;white-space:nowrap;font-size:14.93px;left:769.24px;">（土建）蓝色智谷产业...</div>
<div class="td" style="position:absolute;top:445.08px;height:24.89px;line-height:24.89px;white-space:nowrap;font-size:14.93px;left:964.44px;">（土建）蓝色智谷产业园项目...</div>
<div class="td" style="position:absolute;top:445.08px;height:24.89px;line-height:24.89px;white-space:nowrap;font-size:14.93px;left:1200.53px;">项目/其他直接费...</div>
<div class="td" style="position:absolute;top:445.08px;height:24.89px;line-height:24.89px;white-space:nowrap;font-size:14.93px;left:1351.47px;">平邑县...</div>
<div class="td num" style="position:absolute;top:445.08px;height:24.89px;line-height:24.89px;white-space:nowrap;left:1011.2px;width:533.33px;text-align:right;">35,000</div>
<div class="td" style="position:absolute;top:445.08px;height:24.89px;line-height:24.89px;white-space:nowrap;font-size:14.93px;left:1566.76px;">吕露瑶</div>
<div class="td num" style="position:absolute;top:445.08px;height:24.89px;line-height:24.89px;white-space:nowrap;left:1675.73px;letter-spacing:.5px;">2025-04-24</div>
<div style="position:absolute;left:266.84px;top:492.56px;width:15.29px;height:15.29px;border:1px solid #d9dce3;border-radius:2px;background:#fff;"></div>
<div class="td num" style="position:absolute;top:488.29px;height:24.89px;line-height:24.89px;white-space:nowrap;left:157.42px;width:355.56px;text-align:center;">2</div>
<div class="tagg" style="position:absolute;left:379.38px;top:489.36px;width:65.07px;height:21.87px;border-radius:2px;"></div>
<div style="position:absolute;top:488.47px;height:24.89px;line-height:24.89px;white-space:nowrap;font-size:14.93px;left:234.49px;width:355.56px;text-align:center;color:#3bb26d;">已审批</div>
<div class="tagr" style="position:absolute;left:487.47px;top:489.36px;width:65.42px;height:21.87px;border-radius:2px;"></div>
<div style="position:absolute;top:488.47px;height:24.89px;line-height:24.89px;white-space:nowrap;font-size:14.93px;left:342.4px;width:355.56px;text-align:center;color:#e94b4b;">新签订</div>
<div class="lnk num" style="position:absolute;top:488.29px;height:24.89px;line-height:24.89px;white-space:nowrap;left:595.38px;"><span class="j">J</span>C<span class="j">J</span>D-031</div>
<div class="td" style="position:absolute;top:488.29px;height:24.89px;line-height:24.89px;white-space:nowrap;font-size:14.93px;left:769.24px;">（土建）蓝色智谷产业...</div>
<div class="td" style="position:absolute;top:488.29px;height:24.89px;line-height:24.89px;white-space:nowrap;font-size:14.93px;left:964.44px;">建筑工程意外险-保单</div>
<div class="td" style="position:absolute;top:488.29px;height:24.89px;line-height:24.89px;white-space:nowrap;font-size:14.93px;left:1200.53px;">其他直接费合同</div>
<div class="td" style="position:absolute;top:488.29px;height:24.89px;line-height:24.89px;white-space:nowrap;font-size:14.93px;left:1351.47px;">广州市...</div>
<div class="td num" style="position:absolute;top:488.29px;height:24.89px;line-height:24.89px;white-space:nowrap;left:1011.2px;width:533.33px;text-align:right;">19,100,252</div>
<div class="td" style="position:absolute;top:488.29px;height:24.89px;line-height:24.89px;white-space:nowrap;font-size:14.93px;left:1566.76px;">吕露瑶</div>
<div class="td num" style="position:absolute;top:488.29px;height:24.89px;line-height:24.89px;white-space:nowrap;left:1675.73px;letter-spacing:.5px;">2025-03-17</div>
<div style="position:absolute;left:266.84px;top:535.78px;width:15.29px;height:15.29px;border:1px solid #d9dce3;border-radius:2px;background:#fff;"></div>
<div class="td num" style="position:absolute;top:531.51px;height:24.89px;line-height:24.89px;white-space:nowrap;left:157.42px;width:355.56px;text-align:center;">3</div>
<div class="tagg" style="position:absolute;left:379.38px;top:532.58px;width:65.07px;height:21.87px;border-radius:2px;"></div>
<div style="position:absolute;top:531.69px;height:24.89px;line-height:24.89px;white-space:nowrap;font-size:14.93px;left:234.49px;width:355.56px;text-align:center;color:#3bb26d;">已审批</div>
<div class="tagr" style="position:absolute;left:487.47px;top:532.58px;width:65.42px;height:21.87px;border-radius:2px;"></div>
<div style="position:absolute;top:531.69px;height:24.89px;line-height:24.89px;white-space:nowrap;font-size:14.93px;left:342.4px;width:355.56px;text-align:center;color:#e94b4b;">新签订</div>
<div class="lnk num" style="position:absolute;top:531.51px;height:24.89px;line-height:24.89px;white-space:nowrap;left:595.38px;"><span class="j">J</span>C<span class="j">J</span>D-030</div>
<div class="td" style="position:absolute;top:531.51px;height:24.89px;line-height:24.89px;white-space:nowrap;font-size:14.93px;left:769.24px;">（土建）蓝色智谷产业...</div>
<div class="td" style="position:absolute;top:531.51px;height:24.89px;line-height:24.89px;white-space:nowrap;font-size:14.93px;left:964.44px;">建筑工程一切险</div>
<div class="td" style="position:absolute;top:531.51px;height:24.89px;line-height:24.89px;white-space:nowrap;font-size:14.93px;left:1200.53px;">其他间接费合同</div>
<div class="td" style="position:absolute;top:531.51px;height:24.89px;line-height:24.89px;white-space:nowrap;font-size:14.93px;left:1351.47px;">武汉新...</div>
<div class="td num" style="position:absolute;top:531.51px;height:24.89px;line-height:24.89px;white-space:nowrap;left:1011.2px;width:533.33px;text-align:right;">21,300,121</div>
<div class="td" style="position:absolute;top:531.51px;height:24.89px;line-height:24.89px;white-space:nowrap;font-size:14.93px;left:1566.76px;">王俊伟</div>
<div class="td num" style="position:absolute;top:531.51px;height:24.89px;line-height:24.89px;white-space:nowrap;left:1675.73px;letter-spacing:.5px;">2025-03-17</div>
<div style="position:absolute;left:266.84px;top:579px;width:15.29px;height:15.29px;border:1px solid #d9dce3;border-radius:2px;background:#fff;"></div>
<div class="td num" style="position:absolute;top:574.73px;height:24.89px;line-height:24.89px;white-space:nowrap;left:157.42px;width:355.56px;text-align:center;">4</div>
<div class="tagg" style="position:absolute;left:379.38px;top:575.8px;width:65.07px;height:21.87px;border-radius:2px;"></div>
<div style="position:absolute;top:574.91px;height:24.89px;line-height:24.89px;white-space:nowrap;font-size:14.93px;left:234.49px;width:355.56px;text-align:center;color:#3bb26d;">已审批</div>
<div class="tagr" style="position:absolute;left:487.47px;top:575.8px;width:65.42px;height:21.87px;border-radius:2px;"></div>
<div style="position:absolute;top:574.91px;height:24.89px;line-height:24.89px;white-space:nowrap;font-size:14.93px;left:342.4px;width:355.56px;text-align:center;color:#e94b4b;">新签订</div>
<div class="lnk num" style="position:absolute;top:574.73px;height:24.89px;line-height:24.89px;white-space:nowrap;left:595.38px;">Z<span class="j">J</span><span class="j">J</span>L-2024-Z001</div>
<div class="td" style="position:absolute;top:574.73px;height:24.89px;line-height:24.89px;white-space:nowrap;font-size:14.93px;left:964.44px;">装饰材料采购合同</div>
<div class="td" style="position:absolute;top:574.73px;height:24.89px;line-height:24.89px;white-space:nowrap;font-size:14.93px;left:1200.53px;">供应中心云物资...</div>
<div class="td" style="position:absolute;top:574.73px;height:24.89px;line-height:24.89px;white-space:nowrap;font-size:14.93px;left:1351.47px;">无锡元...</div>
<div class="td num" style="position:absolute;top:574.73px;height:24.89px;line-height:24.89px;white-space:nowrap;left:1011.2px;width:533.33px;text-align:right;">4,174,499.75</div>
<div class="td" style="position:absolute;top:574.73px;height:24.89px;line-height:24.89px;white-space:nowrap;font-size:14.93px;left:1566.76px;">吕露瑶</div>
<div class="td num" style="position:absolute;top:574.73px;height:24.89px;line-height:24.89px;white-space:nowrap;left:1675.73px;letter-spacing:.5px;">2024-02-01</div>
<div style="position:absolute;left:266.84px;top:622.21px;width:15.29px;height:15.29px;border:1px solid #d9dce3;border-radius:2px;background:#fff;"></div>
<div class="td num" style="position:absolute;top:617.95px;height:24.89px;line-height:24.89px;white-space:nowrap;left:157.42px;width:355.56px;text-align:center;">5</div>
<div class="tagg" style="position:absolute;left:379.38px;top:619.01px;width:65.07px;height:21.87px;border-radius:2px;"></div>
<div style="position:absolute;top:618.12px;height:24.89px;line-height:24.89px;white-space:nowrap;font-size:14.93px;left:234.49px;width:355.56px;text-align:center;color:#3bb26d;">已审批</div>
<div class="tagr" style="position:absolute;left:487.47px;top:619.01px;width:65.42px;height:21.87px;border-radius:2px;"></div>
<div style="position:absolute;top:618.12px;height:24.89px;line-height:24.89px;white-space:nowrap;font-size:14.93px;left:342.4px;width:355.56px;text-align:center;color:#e94b4b;">新签订</div>
<div class="lnk num" style="position:absolute;top:617.95px;height:24.89px;line-height:24.89px;white-space:nowrap;left:595.38px;">Z<span class="j">J</span><span class="j">J</span>L-2024-5001</div>
<div class="td" style="position:absolute;top:617.95px;height:24.89px;line-height:24.89px;white-space:nowrap;font-size:14.93px;left:769.24px;">（土建）蓝色智谷产业...</div>
<div class="td" style="position:absolute;top:617.95px;height:24.89px;line-height:24.89px;white-space:nowrap;font-size:14.93px;left:964.44px;">春晖周转材租赁合同</div>
<div class="td" style="position:absolute;top:617.95px;height:24.89px;line-height:24.89px;white-space:nowrap;font-size:14.93px;left:1200.53px;">周转材租赁合同</div>
<div class="td" style="position:absolute;top:617.95px;height:24.89px;line-height:24.89px;white-space:nowrap;font-size:14.93px;left:1351.47px;">江西春...</div>
<div class="td num" style="position:absolute;top:617.95px;height:24.89px;line-height:24.89px;white-space:nowrap;left:1011.2px;width:533.33px;text-align:right;">8,492.4</div>
<div class="td" style="position:absolute;top:617.95px;height:24.89px;line-height:24.89px;white-space:nowrap;font-size:14.93px;left:1566.76px;">吕露瑶</div>
<div class="td num" style="position:absolute;top:617.95px;height:24.89px;line-height:24.89px;white-space:nowrap;left:1675.73px;letter-spacing:.5px;">2024-05-01</div>
<div style="position:absolute;left:266.84px;top:665.43px;width:15.29px;height:15.29px;border:1px solid #d9dce3;border-radius:2px;background:#fff;"></div>
<div class="td num" style="position:absolute;top:661.16px;height:24.89px;line-height:24.89px;white-space:nowrap;left:157.42px;width:355.56px;text-align:center;">6</div>
<div class="tagg" style="position:absolute;left:379.38px;top:662.23px;width:65.07px;height:21.87px;border-radius:2px;"></div>
<div style="position:absolute;top:661.34px;height:24.89px;line-height:24.89px;white-space:nowrap;font-size:14.93px;left:234.49px;width:355.56px;text-align:center;color:#3bb26d;">已审批</div>
<div class="tagr" style="position:absolute;left:487.47px;top:662.23px;width:65.42px;height:21.87px;border-radius:2px;"></div>
<div style="position:absolute;top:661.34px;height:24.89px;line-height:24.89px;white-space:nowrap;font-size:14.93px;left:342.4px;width:355.56px;text-align:center;color:#e94b4b;">新签订</div>
<div class="lnk num" style="position:absolute;top:661.16px;height:24.89px;line-height:24.89px;white-space:nowrap;left:595.38px;">Z<span class="j">J</span><span class="j">J</span>L-2024-3001</div>
<div class="td" style="position:absolute;top:661.16px;height:24.89px;line-height:24.89px;white-space:nowrap;font-size:14.93px;left:964.44px;">广东天和商贸2024年供需合同</div>
<div class="td" style="position:absolute;top:661.16px;height:24.89px;line-height:24.89px;white-space:nowrap;font-size:14.93px;left:1200.53px;">资产采购合同</div>
<div class="td" style="position:absolute;top:661.16px;height:24.89px;line-height:24.89px;white-space:nowrap;font-size:14.93px;left:1351.47px;">广东天...</div>
<div class="td num" style="position:absolute;top:661.16px;height:24.89px;line-height:24.89px;white-space:nowrap;left:1011.2px;width:533.33px;text-align:right;">59,611</div>
<div class="td" style="position:absolute;top:661.16px;height:24.89px;line-height:24.89px;white-space:nowrap;font-size:14.93px;left:1566.76px;">吕露瑶</div>
<div class="td num" style="position:absolute;top:661.16px;height:24.89px;line-height:24.89px;white-space:nowrap;left:1675.73px;letter-spacing:.5px;">2024-05-20</div>
<div style="position:absolute;left:266.84px;top:708.65px;width:15.29px;height:15.29px;border:1px solid #d9dce3;border-radius:2px;background:#fff;"></div>
<div class="td num" style="position:absolute;top:704.38px;height:24.89px;line-height:24.89px;white-space:nowrap;left:157.42px;width:355.56px;text-align:center;">7</div>
<div class="tagg" style="position:absolute;left:379.38px;top:705.45px;width:65.07px;height:21.87px;border-radius:2px;"></div>
<div style="position:absolute;top:704.56px;height:24.89px;line-height:24.89px;white-space:nowrap;font-size:14.93px;left:234.49px;width:355.56px;text-align:center;color:#3bb26d;">已审批</div>
<div class="tagr" style="position:absolute;left:487.47px;top:705.45px;width:65.42px;height:21.87px;border-radius:2px;"></div>
<div style="position:absolute;top:704.56px;height:24.89px;line-height:24.89px;white-space:nowrap;font-size:14.93px;left:342.4px;width:355.56px;text-align:center;color:#e94b4b;">新签订</div>
<div class="lnk num" style="position:absolute;top:704.38px;height:24.89px;line-height:24.89px;white-space:nowrap;left:595.38px;">Z<span class="j">J</span><span class="j">J</span>L-2024-2001</div>
<div class="td" style="position:absolute;top:704.38px;height:24.89px;line-height:24.89px;white-space:nowrap;font-size:14.93px;left:964.44px;">中建资产采购合同</div>
<div class="td" style="position:absolute;top:704.38px;height:24.89px;line-height:24.89px;white-space:nowrap;font-size:14.93px;left:1200.53px;">资产采购合同</div>
<div class="td" style="position:absolute;top:704.38px;height:24.89px;line-height:24.89px;white-space:nowrap;font-size:14.93px;left:1351.47px;">广东天...</div>
<div class="td num" style="position:absolute;top:704.38px;height:24.89px;line-height:24.89px;white-space:nowrap;left:1011.2px;width:533.33px;text-align:right;">413,475</div>
<div class="td" style="position:absolute;top:704.38px;height:24.89px;line-height:24.89px;white-space:nowrap;font-size:14.93px;left:1566.76px;">吕露瑶</div>
<div class="td num" style="position:absolute;top:704.38px;height:24.89px;line-height:24.89px;white-space:nowrap;left:1675.73px;letter-spacing:.5px;">2024-05-20</div>
<div style="position:absolute;left:266.84px;top:751.87px;width:15.29px;height:15.29px;border:1px solid #d9dce3;border-radius:2px;background:#fff;"></div>
<div class="td num" style="position:absolute;top:747.6px;height:24.89px;line-height:24.89px;white-space:nowrap;left:157.42px;width:355.56px;text-align:center;">8</div>
<div class="tagg" style="position:absolute;left:379.38px;top:748.67px;width:65.07px;height:21.87px;border-radius:2px;"></div>
<div style="position:absolute;top:747.78px;height:24.89px;line-height:24.89px;white-space:nowrap;font-size:14.93px;left:234.49px;width:355.56px;text-align:center;color:#3bb26d;">已审批</div>
<div class="tagr" style="position:absolute;left:487.47px;top:748.67px;width:65.42px;height:21.87px;border-radius:2px;"></div>
<div style="position:absolute;top:747.78px;height:24.89px;line-height:24.89px;white-space:nowrap;font-size:14.93px;left:342.4px;width:355.56px;text-align:center;color:#e94b4b;">新签订</div>
<div class="lnk num" style="position:absolute;top:747.6px;height:24.89px;line-height:24.89px;white-space:nowrap;left:595.38px;">Z<span class="j">J</span><span class="j">J</span>L-2024-1003</div>
<div class="td" style="position:absolute;top:747.6px;height:24.89px;line-height:24.89px;white-space:nowrap;font-size:14.93px;left:964.44px;">房屋租赁合同</div>
<div class="td" style="position:absolute;top:747.6px;height:24.89px;line-height:24.89px;white-space:nowrap;font-size:14.93px;left:1200.53px;">公司其他合同</div>
<div class="td" style="position:absolute;top:747.6px;height:24.89px;line-height:24.89px;white-space:nowrap;font-size:14.93px;left:1351.47px;">海居租房</div>
<div class="td num" style="position:absolute;top:747.6px;height:24.89px;line-height:24.89px;white-space:nowrap;left:1011.2px;width:533.33px;text-align:right;">93,600</div>
<div class="td" style="position:absolute;top:747.6px;height:24.89px;line-height:24.89px;white-space:nowrap;font-size:14.93px;left:1566.76px;">吕露瑶</div>
<div class="td num" style="position:absolute;top:747.6px;height:24.89px;line-height:24.89px;white-space:nowrap;left:1675.73px;letter-spacing:.5px;">2024-05-20</div>
<div style="position:absolute;left:266.84px;top:795.08px;width:15.29px;height:15.29px;border:1px solid #d9dce3;border-radius:2px;background:#fff;"></div>
<div class="td num" style="position:absolute;top:790.82px;height:24.89px;line-height:24.89px;white-space:nowrap;left:157.42px;width:355.56px;text-align:center;">9</div>
<div class="tagg" style="position:absolute;left:379.38px;top:791.88px;width:65.07px;height:21.87px;border-radius:2px;"></div>
<div style="position:absolute;top:791px;height:24.89px;line-height:24.89px;white-space:nowrap;font-size:14.93px;left:234.49px;width:355.56px;text-align:center;color:#3bb26d;">已审批</div>
<div class="tagr" style="position:absolute;left:487.47px;top:791.88px;width:65.42px;height:21.87px;border-radius:2px;"></div>
<div style="position:absolute;top:791px;height:24.89px;line-height:24.89px;white-space:nowrap;font-size:14.93px;left:342.4px;width:355.56px;text-align:center;color:#e94b4b;">新签订</div>
<div class="lnk num" style="position:absolute;top:790.82px;height:24.89px;line-height:24.89px;white-space:nowrap;left:595.38px;">Z<span class="j">J</span><span class="j">J</span>L-2024-1002</div>
<div class="td" style="position:absolute;top:790.82px;height:24.89px;line-height:24.89px;white-space:nowrap;font-size:14.93px;left:964.44px;">办公桌椅采购合同</div>
<div class="td" style="position:absolute;top:790.82px;height:24.89px;line-height:24.89px;white-space:nowrap;font-size:14.93px;left:1200.53px;">公司其他合同</div>
<div class="td" style="position:absolute;top:790.82px;height:24.89px;line-height:24.89px;white-space:nowrap;font-size:14.93px;left:1351.47px;">江苏浦...</div>
<div class="td num" style="position:absolute;top:790.82px;height:24.89px;line-height:24.89px;white-space:nowrap;left:1011.2px;width:533.33px;text-align:right;">8,316</div>
<div class="td" style="position:absolute;top:790.82px;height:24.89px;line-height:24.89px;white-space:nowrap;font-size:14.93px;left:1566.76px;">吕露瑶</div>
<div class="td num" style="position:absolute;top:790.82px;height:24.89px;line-height:24.89px;white-space:nowrap;left:1675.73px;letter-spacing:.5px;">2024-05-20</div>
<div style="position:absolute;left:266.84px;top:838.3px;width:15.29px;height:15.29px;border:1px solid #d9dce3;border-radius:2px;background:#fff;"></div>
<div class="td num" style="position:absolute;top:834.04px;height:24.89px;line-height:24.89px;white-space:nowrap;left:157.42px;width:355.56px;text-align:center;">10</div>
<div class="tagg" style="position:absolute;left:379.38px;top:835.1px;width:65.07px;height:21.87px;border-radius:2px;"></div>
<div style="position:absolute;top:834.21px;height:24.89px;line-height:24.89px;white-space:nowrap;font-size:14.93px;left:234.49px;width:355.56px;text-align:center;color:#3bb26d;">已审批</div>
<div class="tagr" style="position:absolute;left:487.47px;top:835.1px;width:65.42px;height:21.87px;border-radius:2px;"></div>
<div style="position:absolute;top:834.21px;height:24.89px;line-height:24.89px;white-space:nowrap;font-size:14.93px;left:342.4px;width:355.56px;text-align:center;color:#e94b4b;">新签订</div>
<div class="lnk num" style="position:absolute;top:834.04px;height:24.89px;line-height:24.89px;white-space:nowrap;left:595.38px;">Z<span class="j">J</span><span class="j">J</span>L-2024-1001</div>
<div class="td" style="position:absolute;top:834.04px;height:24.89px;line-height:24.89px;white-space:nowrap;font-size:14.93px;left:964.44px;">网络推广合同</div>
<div class="td" style="position:absolute;top:834.04px;height:24.89px;line-height:24.89px;white-space:nowrap;font-size:14.93px;left:1200.53px;">公司其他合同</div>
<div class="td" style="position:absolute;top:834.04px;height:24.89px;line-height:24.89px;white-space:nowrap;font-size:14.93px;left:1351.47px;">广东天...</div>
<div class="td num" style="position:absolute;top:834.04px;height:24.89px;line-height:24.89px;white-space:nowrap;left:1011.2px;width:533.33px;text-align:right;">5,994</div>
<div class="td" style="position:absolute;top:834.04px;height:24.89px;line-height:24.89px;white-space:nowrap;font-size:14.93px;left:1566.76px;">吕露瑶</div>
<div class="td num" style="position:absolute;top:834.04px;height:24.89px;line-height:24.89px;white-space:nowrap;left:1675.73px;letter-spacing:.5px;">2024-05-20</div>
<div style="position:absolute;left:1788.09px;top:391.29px;width:108.62px;height:594.31px;background:#fff;box-shadow:-1px 1px 7px rgba(0,0,0,.12);"></div>
<div style="position:absolute;left:1788.09px;top:391.29px;width:108.62px;height:1.07px;background:#eceef1;"></div>
<div style="position:absolute;left:1788.09px;top:435.02px;width:108.62px;height:1.07px;background:#eceef1;"></div>
<div class="hd" style="position:absolute;top:401.96px;height:24.89px;line-height:24.89px;white-space:nowrap;font-size:14.93px;left:1664.53px;width:355.56px;text-align:center;">操作</div>
<div style="position:absolute;left:1788.09px;top:478.24px;width:108.62px;height:1.07px;background:#eceef1;"></div>
<div class="op" style="position:absolute;top:445.08px;height:24.89px;line-height:24.89px;white-space:nowrap;font-size:14.93px;left:1806.93px;">修改</div>
<div class="op" style="position:absolute;top:445.08px;height:24.89px;line-height:24.89px;white-space:nowrap;font-size:14.93px;left:1849.24px;">删除</div>
<div style="position:absolute;left:1788.09px;top:521.46px;width:108.62px;height:1.07px;background:#eceef1;"></div>
<div class="op" style="position:absolute;top:488.29px;height:24.89px;line-height:24.89px;white-space:nowrap;font-size:14.93px;left:1806.93px;">修改</div>
<div class="op" style="position:absolute;top:488.29px;height:24.89px;line-height:24.89px;white-space:nowrap;font-size:14.93px;left:1849.24px;">删除</div>
<div style="position:absolute;left:1788.09px;top:564.68px;width:108.62px;height:1.07px;background:#eceef1;"></div>
<div class="op" style="position:absolute;top:531.51px;height:24.89px;line-height:24.89px;white-space:nowrap;font-size:14.93px;left:1806.93px;">修改</div>
<div class="op" style="position:absolute;top:531.51px;height:24.89px;line-height:24.89px;white-space:nowrap;font-size:14.93px;left:1849.24px;">删除</div>
<div style="position:absolute;left:1788.09px;top:607.89px;width:108.62px;height:1.07px;background:#eceef1;"></div>
<div class="op" style="position:absolute;top:574.73px;height:24.89px;line-height:24.89px;white-space:nowrap;font-size:14.93px;left:1806.93px;">修改</div>
<div class="op" style="position:absolute;top:574.73px;height:24.89px;line-height:24.89px;white-space:nowrap;font-size:14.93px;left:1849.24px;">删除</div>
<div style="position:absolute;left:1788.09px;top:651.11px;width:108.62px;height:1.07px;background:#eceef1;"></div>
<div class="op" style="position:absolute;top:617.95px;height:24.89px;line-height:24.89px;white-space:nowrap;font-size:14.93px;left:1806.93px;">修改</div>
<div class="op" style="position:absolute;top:617.95px;height:24.89px;line-height:24.89px;white-space:nowrap;font-size:14.93px;left:1849.24px;">删除</div>
<div style="position:absolute;left:1788.09px;top:694.33px;width:108.62px;height:1.07px;background:#eceef1;"></div>
<div class="op" style="position:absolute;top:661.16px;height:24.89px;line-height:24.89px;white-space:nowrap;font-size:14.93px;left:1806.93px;">修改</div>
<div class="op" style="position:absolute;top:661.16px;height:24.89px;line-height:24.89px;white-space:nowrap;font-size:14.93px;left:1849.24px;">删除</div>
<div style="position:absolute;left:1788.09px;top:737.55px;width:108.62px;height:1.07px;background:#eceef1;"></div>
<div class="op" style="position:absolute;top:704.38px;height:24.89px;line-height:24.89px;white-space:nowrap;font-size:14.93px;left:1806.93px;">修改</div>
<div class="op" style="position:absolute;top:704.38px;height:24.89px;line-height:24.89px;white-space:nowrap;font-size:14.93px;left:1849.24px;">删除</div>
<div style="position:absolute;left:1788.09px;top:780.76px;width:108.62px;height:1.07px;background:#eceef1;"></div>
<div class="op" style="position:absolute;top:747.6px;height:24.89px;line-height:24.89px;white-space:nowrap;font-size:14.93px;left:1806.93px;">修改</div>
<div class="op" style="position:absolute;top:747.6px;height:24.89px;line-height:24.89px;white-space:nowrap;font-size:14.93px;left:1849.24px;">删除</div>
<div style="position:absolute;left:1788.09px;top:823.98px;width:108.62px;height:1.07px;background:#eceef1;"></div>
<div class="op" style="position:absolute;top:790.82px;height:24.89px;line-height:24.89px;white-space:nowrap;font-size:14.93px;left:1806.93px;">修改</div>
<div class="op" style="position:absolute;top:790.82px;height:24.89px;line-height:24.89px;white-space:nowrap;font-size:14.93px;left:1849.24px;">删除</div>
<div style="position:absolute;left:1788.09px;top:867.2px;width:108.62px;height:1.07px;background:#eceef1;"></div>
<div class="op" style="position:absolute;top:834.04px;height:24.89px;line-height:24.89px;white-space:nowrap;font-size:14.93px;left:1806.93px;">修改</div>
<div class="op" style="position:absolute;top:834.04px;height:24.89px;line-height:24.89px;white-space:nowrap;font-size:14.93px;left:1849.24px;">删除</div>
<div style="position:absolute;left:249.6px;top:987.02px;width:1647.64px;height:18.13px;background:#fcfcfc;"></div>
<div style="position:absolute;left:249.6px;top:1005.16px;width:1647.64px;height:1.24px;background:#e9e9ea;"></div>
<div style="position:absolute;left:270.93px;top:992.18px;width:1323.73px;height:10.49px;background:#8c8c8c;border-radius:6px;"></div>
<svg style="position:absolute;left:255.29px;top:992.71px;width:6.4px;height:13.16px;overflow:visible;" viewBox="0 0 4 8"><path d="M4 0v8L0 4z" fill="#6a6a6a"/></svg>
<svg style="position:absolute;left:1884.09px;top:992.71px;width:6.4px;height:13.16px;overflow:visible;" viewBox="0 0 4 8"><path d="M0 0v8l4-4z" fill="#6a6a6a"/></svg>
<div style="position:absolute;top:1017.07px;height:24.89px;line-height:24.89px;white-space:nowrap;font-size:14.93px;left:1261.87px;color:#606266;">共 59 条</div>
<div style="position:absolute;left:1334.22px;top:1014.04px;width:106.31px;height:28.62px;border:1px solid #dfe2e8;border-radius:3px;background:#fff;"></div>
<div style="position:absolute;top:1017.07px;height:24.89px;line-height:24.89px;white-space:nowrap;font-size:13.87px;left:1355.56px;color:#55585e;">10条/页</div>
<svg style="position:absolute;left:1424.18px;top:1021.87px;width:8.89px;height:8.89px;overflow:visible;" viewBox="0 0 16 16"><path d="M2 5.4l6 5.6 6-5.6" stroke="#c3c7cf" stroke-width="1.3" stroke-linecap="round" stroke-linejoin="round"/></svg>
<svg style="position:absolute;left:1467.56px;top:1023.29px;width:11.02px;height:11.02px;overflow:visible;" viewBox="0 0 16 16"><path d="M10.6 2l-5.600 6 5.600 6" stroke="#c3c7cf" stroke-width="1.5" stroke-linecap="round" stroke-linejoin="round"/></svg>
<div style="position:absolute;top:1016.53px;height:24.89px;line-height:24.89px;white-space:nowrap;font-size:16.36px;left:1337.6px;width:355.56px;text-align:center;color:#5aa2f2;font-weight:700;">1</div>
<div style="position:absolute;top:1016.53px;height:24.89px;line-height:24.89px;white-space:nowrap;font-size:16.36px;left:1375.29px;width:355.56px;text-align:center;color:#303133;font-weight:700;">2</div>
<div style="position:absolute;top:1016.53px;height:24.89px;line-height:24.89px;white-space:nowrap;font-size:16.36px;left:1414.04px;width:355.56px;text-align:center;color:#303133;font-weight:700;">3</div>
<div style="position:absolute;top:1016.53px;height:24.89px;line-height:24.89px;white-space:nowrap;font-size:16.36px;left:1451.73px;width:355.56px;text-align:center;color:#303133;font-weight:700;">4</div>
<div style="position:absolute;top:1016.53px;height:24.89px;line-height:24.89px;white-space:nowrap;font-size:16.36px;left:1528.89px;width:355.56px;text-align:center;color:#303133;font-weight:700;">6</div>
<div style="position:absolute;left:1662.58px;top:1029.16px;width:2.84px;height:2.84px;background:#303133;border-radius:50%;"></div>
<div style="position:absolute;left:1667.38px;top:1029.16px;width:2.84px;height:2.84px;background:#303133;border-radius:50%;"></div>
<div style="position:absolute;left:1672.18px;top:1029.16px;width:2.84px;height:2.84px;background:#303133;border-radius:50%;"></div>
<svg style="position:absolute;left:1742.93px;top:1023.11px;width:11.38px;height:11.38px;overflow:visible;" viewBox="0 0 16 16"><path d="M5.400 2l5.600 6-5.600 6" stroke="#2f3135" stroke-width="2.2" stroke-linecap="round" stroke-linejoin="round"/></svg>
<div style="position:absolute;top:1017.07px;height:24.89px;line-height:24.89px;white-space:nowrap;font-size:14.22px;left:1791.11px;color:#55585e;font-weight:500;">前往</div>
<div style="position:absolute;left:1824.71px;top:1014.04px;width:49.24px;height:28.8px;border:1px solid #dfe2e8;border-radius:3px;background:#fff;"></div>
<div style="position:absolute;top:1016.53px;height:24.89px;line-height:24.89px;white-space:nowrap;font-size:16px;left:1671.47px;width:355.56px;text-align:center;color:#55585e;">1</div>
<div style="position:absolute;top:1017.07px;height:24.89px;line-height:24.89px;white-space:nowrap;font-size:14.93px;left:1878.76px;color:#55585e;font-weight:500;">页</div>
</div></body></html>
